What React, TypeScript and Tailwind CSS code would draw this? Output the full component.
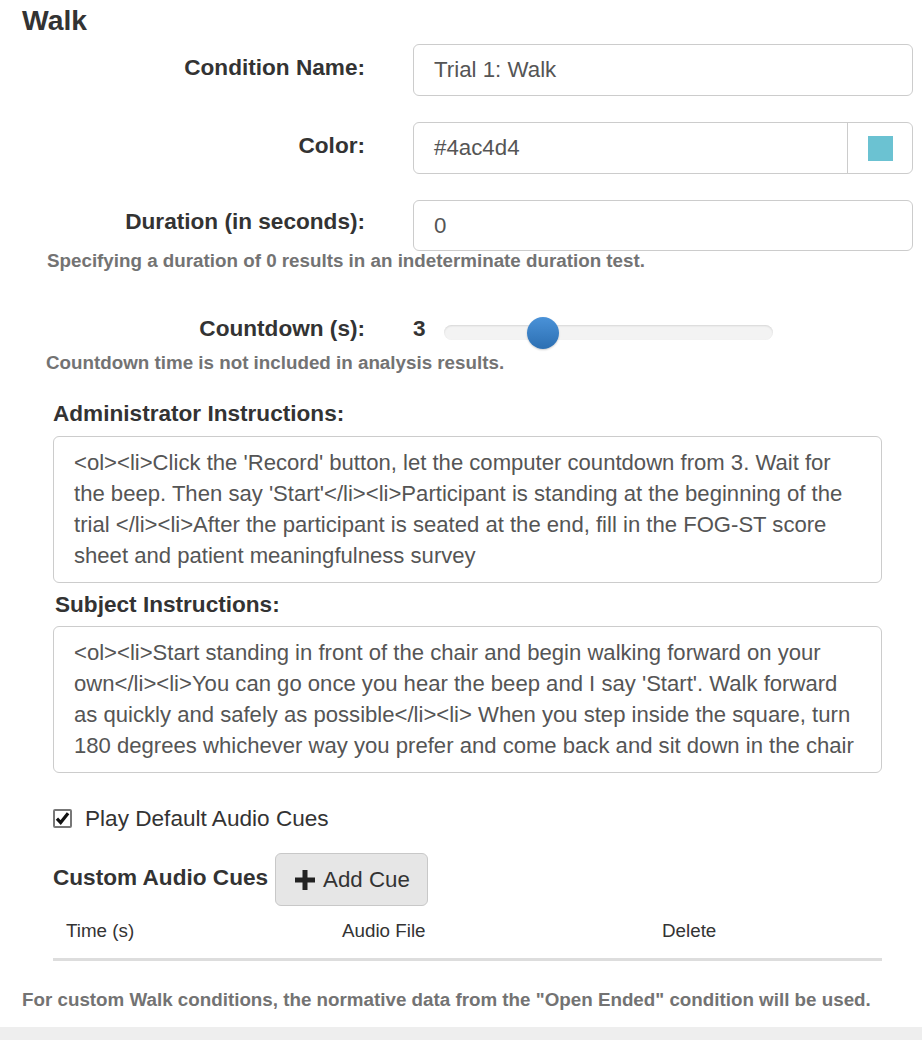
export default function App() {
    const adminText =
        "<ol><li>Click the 'Record' button, let the computer countdown from 3. Wait for the beep. Then say 'Start'</li><li>Participant is standing at the beginning of the trial </li><li>After the participant is seated at the end, fill in the FOG-ST score sheet and patient meaningfulness survey";
    const subjectText =
        "<ol><li>Start standing in front of the chair and begin walking forward on your own</li><li>You can go once you hear the beep and I say 'Start'. Walk forward as quickly and safely as possible</li><li> When you step inside the square, turn 180 degrees whichever way you prefer and come back and sit down in the chair";

    return (
        <div className="w-[922px] h-[1040px] bg-white text-[#333] flex flex-col overflow-hidden font-['Liberation_Sans',Arial,Helvetica,sans-serif]">
            <div className="flex-1 pl-[22px] pt-[4px]">
                <h2 className="text-[28.3px] leading-[32px] font-bold">Walk</h2>

                {/* ----------- CAMPOS ------------ */}
                <div className="mt-[8px] flex flex-col gap-[26px]">
                    <div className="flex items-center">
                        <label className="w-[343px] pb-[5px] text-right text-[22.6px] font-bold">Condition Name:</label>
                        <div className="ml-[48px] w-[500px] h-[52px] border border-[#ccc] rounded-[6px] flex items-center px-[20px] text-[22.3px] text-[#555]">
                            Trial 1: Walk
                        </div>
                    </div>

                    <div className="flex items-center">
                        <label className="w-[343px] pb-[5px] text-right text-[22.6px] font-bold">Color:</label>
                        <div className="ml-[48px] w-[500px] h-[52px] border border-[#ccc] rounded-[6px] flex">
                            <div className="flex-1 flex items-center px-[20px] text-[22.3px] text-[#555]">#4ac4d4</div>
                            <div className="w-[65px] border-l border-[#ccc] flex items-center justify-center">
                                <div className="w-[25px] h-[25px] bg-[#6bc2d2]"></div>
                            </div>
                        </div>
                    </div>

                    <div className="flex items-center">
                        <label className="w-[343px] pb-[7px] text-right text-[22.6px] font-bold">Duration (in seconds):</label>
                        <div className="ml-[48px] w-[500px] h-[51px] border border-[#ccc] rounded-[6px] flex items-center px-[20px] text-[22.3px] text-[#555]">
                            0
                        </div>
                    </div>
                </div>
                <p className="pl-[25px] text-[18.8px] leading-[20px] font-bold text-[#737373]">
                    Specifying a duration of 0 results in an indeterminate duration test.
                </p>

                {/* ----------- COUNTDOWN ------------ */}
                <div className="mt-[45px] flex items-center h-[32px]">
                    <label className="w-[343px] pb-[6px] text-right text-[22.6px] font-bold">Countdown (s):</label>
                    <span className="ml-[48px] w-[31px] pb-[6px] text-[22.6px] font-bold">3</span>
                    <div className="relative w-[329px] h-[15px] rounded-full bg-[#f3f3f3] shadow-[inset_0_1px_2px_rgba(0,0,0,0.12)]">
                        <div className="absolute left-[83px] top-[-8px] w-[32px] h-[32px] rounded-full bg-gradient-to-b from-[#4a92d8] to-[#2c6fb2] shadow-[0_1px_2px_rgba(0,0,0,0.2)]"></div>
                    </div>
                </div>
                <p className="mt-[5px] pl-[24px] text-[18.8px] leading-[20px] font-bold text-[#737373]">
                    Countdown time is not included in analysis results.
                </p>

                {/* ----------- INSTRUCCIONES ------------ */}
                <div className="pl-[31px] w-[860px]">
                    <h4 className="mt-[25px] text-[22.6px] leading-[31px] font-bold">Administrator Instructions:</h4>
                    <div className="mt-[7px] border border-[#ccc] rounded-[6px] pl-[20px] pr-[17px] py-[10px] h-[147px] text-[22.1px] leading-[31px] text-[#555] overflow-hidden">
                        {adminText}
                    </div>

                    <h4 className="mt-[6px] pl-[2px] text-[22.6px] leading-[31px] font-bold">Subject Instructions:</h4>
                    <div className="mt-[6px] border border-[#ccc] rounded-[6px] pl-[20px] pr-[17px] py-[10px] h-[147px] text-[22.1px] leading-[31px] text-[#555] overflow-hidden">
                        {subjectText}
                    </div>

                    {/* ----------- AUDIO ------------ */}
                    <div className="mt-[30px] flex items-center h-[31px]">
                        <div className="w-[19px] h-[19px] border-2 border-[#777] rounded-[2px] bg-white flex items-center justify-center">
                            <svg width="15" height="15" viewBox="0 0 14 14">
                                <path d="M1.8 7.2 L5.3 10.8 L12.2 2.2" fill="none" stroke="#111" strokeWidth="3" />
                            </svg>
                        </div>
                        <span className="ml-[13px] text-[22.6px]">Play Default Audio Cues</span>
                    </div>

                    <div className="mt-[19px] flex items-center">
                        <span className="pb-[4px] text-[22.6px] font-bold">Custom Audio Cues</span>
                        <button className="ml-[7px] h-[53px] pl-[17px] pr-[17px] flex items-center gap-[6px] bg-[#e6e6e6] border border-[#c8c8c8] rounded-[6px] text-[22.3px] text-[#333]">
                            <svg width="24" height="24" viewBox="0 0 24 24">
                                <path d="M9.5 2h5v7.5H22v5h-7.5V22h-5v-7.5H2v-5h7.5z" fill="#222" />
                            </svg>
                            Add Cue
                        </button>
                    </div>

                    <div className="mt-[4px] w-[829px] border-b-[3px] border-[#ddd] h-[51px] pb-[6px] flex items-center text-[18.8px]">
                        <span className="ml-[13px] w-[276px]">Time (s)</span>
                        <span className="w-[320px]">Audio File</span>
                        <span>Delete</span>
                    </div>
                </div>

                <p className="mt-[29px] text-[18.8px] leading-[20px] font-bold text-[#737373]">
                    For custom Walk conditions, the normative data from the "Open Ended" condition will be used.
                </p>
            </div>
            <div className="h-[13px] bg-[#eee]"></div>
        </div>
    );
}
